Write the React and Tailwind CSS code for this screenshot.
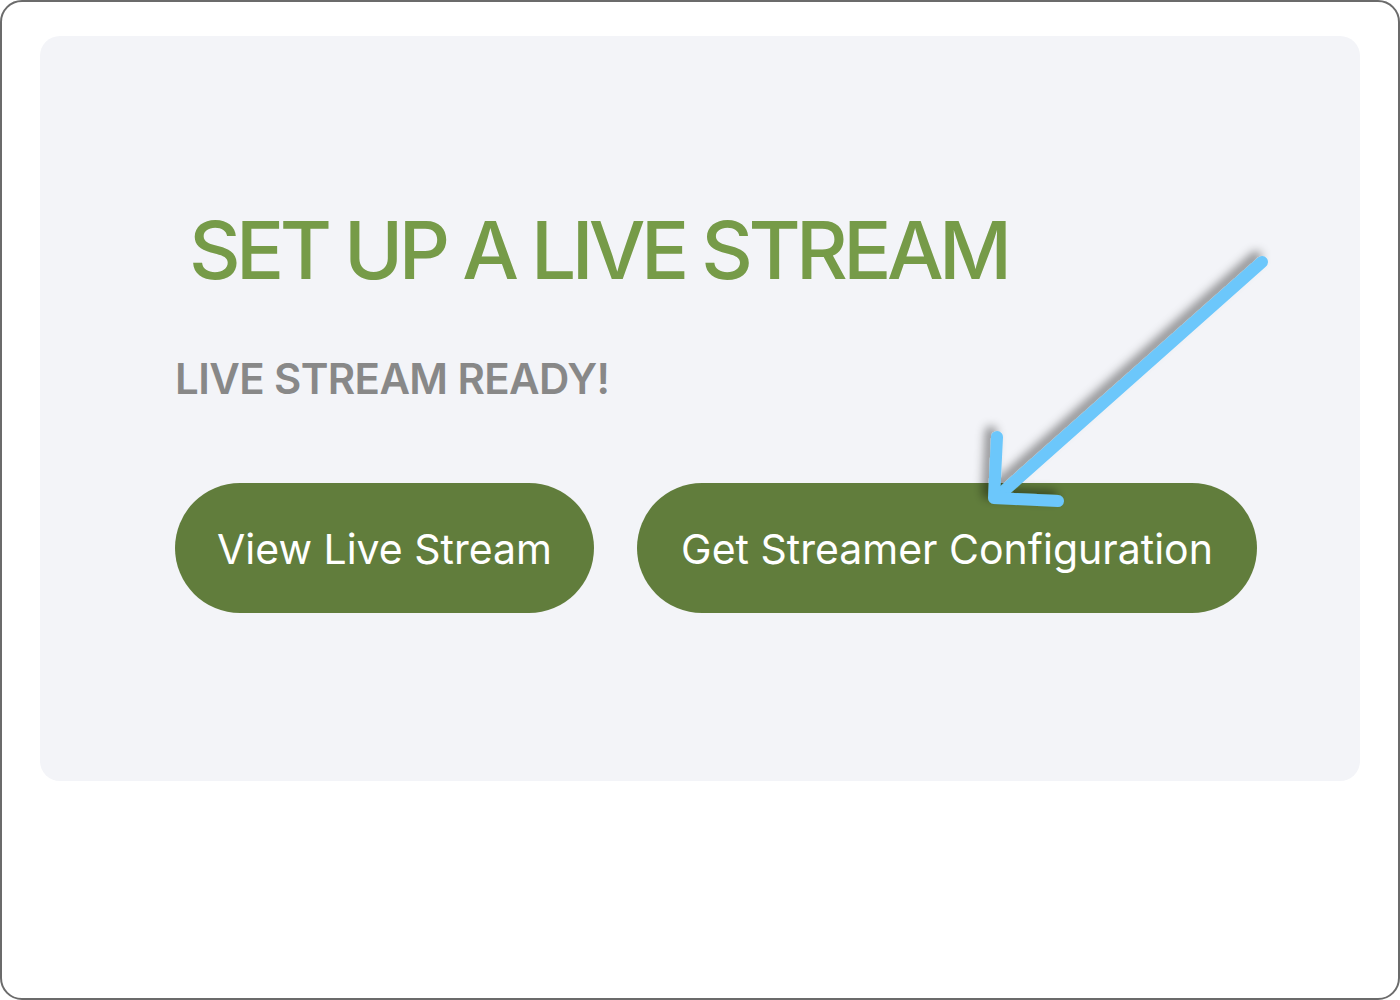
export default function App() {
  return (
    <div className="h-[1000px] w-[1400px] bg-white" style={{ fontFamily: "Inter, 'Noto Sans', sans-serif" }}>
      <div className="h-full w-full rounded-[22px] border-2 border-[#6b6b6b] bg-white pt-[34px] px-[38px]">
        <div className="relative h-[745px] rounded-[20px] bg-[#f3f4f8] pl-[135px] pt-[174px]">
          <h1 className="pl-[14px] text-[80px] font-medium leading-none tracking-[-4.6px] text-[#769b48]">SET UP A LIVE STREAM</h1>
          <h2 className="mt-[68px] text-[42px] font-semibold leading-none tracking-[-0.6px] text-[#888888]">LIVE STREAM READY!</h2>
          <div className="mt-[83px] flex gap-[43px]">
            <button className="flex h-[130px] w-[419px] items-center justify-center rounded-full bg-[#617d3c] pt-[3px] text-[41px] leading-none text-white">
              View Live Stream
            </button>
            <button className="flex h-[130px] w-[620px] items-center justify-center rounded-full bg-[#617d3c] pt-[3px] text-[41px] leading-none text-white">
              Get Streamer Configuration
            </button>
          </div>
          <svg className="absolute left-0 top-0 pointer-events-none" width="1320" height="745" viewBox="0 0 1320 745">
            <defs>
              <filter id="sh" x="-20%" y="-20%" width="140%" height="140%">
                <feDropShadow dx="-6" dy="-5" stdDeviation="5" floodColor="#000" floodOpacity="0.4" />
              </filter>
            </defs>
            <g filter="url(#sh)" fill="none" stroke="#6cc7fb" strokeWidth="12" strokeLinecap="round" strokeLinejoin="round">
              <path d="M1222 226 L956 462" />
              <path d="M957 401 L954 462 L1018 465" />
            </g>
          </svg>
        </div>
      </div>
    </div>
  );
}
